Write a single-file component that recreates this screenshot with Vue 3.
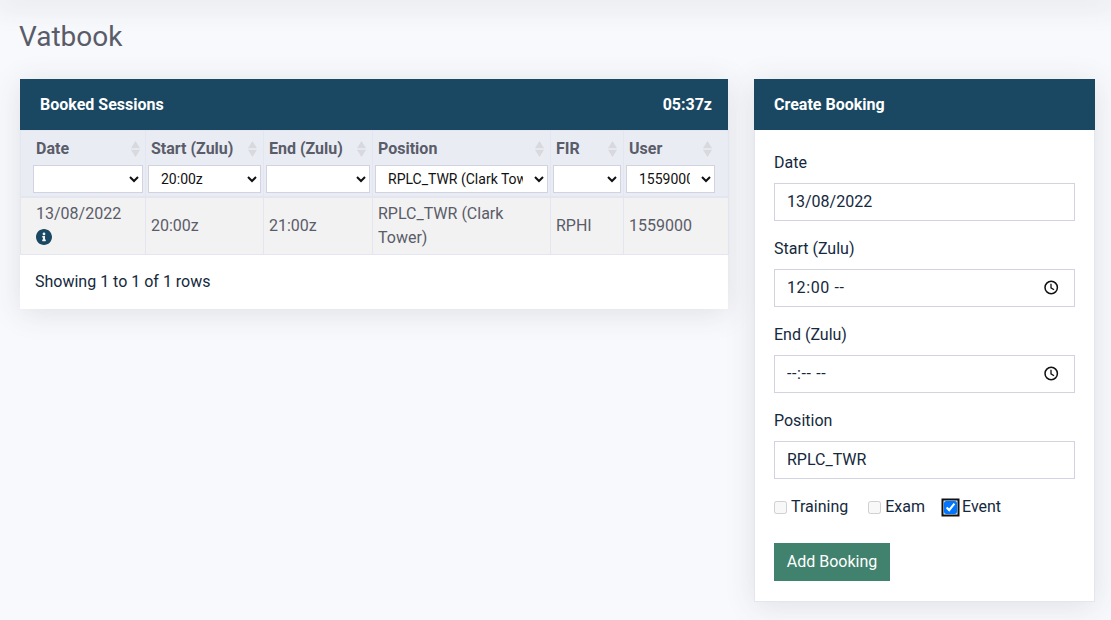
<script setup>
const columns = [
  { key: 'date', label: 'Date', selected: '', options: ['', '13/08/2022'] },
  { key: 'start', label: 'Start (Zulu)', selected: '20:00z', options: ['', '20:00z'] },
  { key: 'end', label: 'End (Zulu)', selected: '', options: ['', '21:00z'] },
  { key: 'position', label: 'Position', selected: 'RPLC_TWR (Clark Tower)', options: ['', 'RPLC_TWR (Clark Tower)'] },
  { key: 'fir', label: 'FIR', selected: '', options: ['', 'RPHI'] },
  { key: 'user', label: 'User', selected: '1559000', options: ['', '1559000'] }
]
const timeFields = [
  { label: 'Start (Zulu)', value: '12:00 --' },
  { label: 'End (Zulu)', value: '--:-- --' }
]
</script>

<template>
  <div class="page">
    <div class="topbar"></div>
    <h1 class="title">Vatbook</h1>
    <div class="layout">
      <section class="card sessions">
        <header class="card-head">
          <span>Booked Sessions</span>
          <span>05:37z</span>
        </header>
        <table class="table">
          <colgroup>
            <col v-for="c in columns" :key="c.key" :class="'w-' + c.key" />
          </colgroup>
          <thead>
            <tr>
              <th v-for="c in columns" :key="c.key" :class="'th-' + c.key">
                <div class="th-line">
                  <span>{{ c.label }}</span>
                  <svg class="sort" width="9" height="16" viewBox="0 0 9 16" aria-hidden="true">
                    <path d="M4.5 0 9 7.3H0z" fill="#d8d9de" />
                    <path d="M4.5 16 9 8.7H0z" fill="#d8d9de" />
                  </svg>
                </div>
                <select class="filter" :class="'sel-' + c.key">
                  <option v-for="o in c.options" :key="o" :selected="o === c.selected">{{ o }}</option>
                </select>
              </th>
            </tr>
          </thead>
          <tbody>
            <tr>
              <td class="td-date">
                13/08/2022
                <svg class="info" width="16" height="16" viewBox="8 8 496 496" aria-hidden="true">
                  <path fill="#1a4862" d="M256 8C119.043 8 8 119.083 8 256c0 136.997 111.043 248 248 248s248-111.003 248-248C504 119.083 392.957 8 256 8zm0 110c23.196 0 42 18.804 42 42s-18.804 42-42 42-42-18.804-42-42 18.804-42 42-42zm56 254c0 6.627-5.373 12-12 12h-88c-6.627 0-12-5.373-12-12v-24c0-6.627 5.373-12 12-12h12v-64h-12c-6.627 0-12-5.373-12-12v-24c0-6.627 5.373-12 12-12h64c6.627 0 12 5.373 12 12v100h12c6.627 0 12 5.373 12 12v24z" />
                </svg>
              </td>
              <td>20:00z</td>
              <td>21:00z</td>
              <td>RPLC_TWR (Clark Tower)</td>
              <td>RPHI</td>
              <td>1559000</td>
            </tr>
          </tbody>
        </table>
        <div class="pagination">Showing 1 to 1 of 1 rows</div>
      </section>

      <section class="card booking">
        <header class="card-head">
          <span>Create Booking</span>
        </header>
        <form class="form" @submit.prevent>
          <div class="group">
            <label>Date</label>
            <input class="control" type="text" value="13/08/2022" />
          </div>
          <div v-for="f in timeFields" :key="f.label" class="group">
            <label>{{ f.label }}</label>
            <div class="time-wrap">
              <input class="control time" type="text" :value="f.value" />
              <svg class="clock" width="15" height="15" viewBox="0 0 15 15" aria-hidden="true">
                <circle cx="7.2" cy="7.5" r="6.2" fill="none" stroke="#111" stroke-width="1.5" />
                <path d="M7 3.8v4l3 1.9" fill="none" stroke="#111" stroke-width="1.3" />
              </svg>
            </div>
          </div>
          <div class="group">
            <label>Position</label>
            <input class="control" type="text" value="RPLC_TWR" />
          </div>
          <div class="checks">
            <label class="check training"><input type="checkbox" disabled />Training</label>
            <label class="check exam"><input type="checkbox" disabled />Exam</label>
            <label class="check event"><input type="checkbox" checked />Event</label>
          </div>
          <button class="submit" type="submit">Add Booking</button>
        </form>
      </section>
    </div>
  </div>
</template>

<style scoped>
.page {
  min-height: 620px;
  box-sizing: border-box;
  padding: 0 16px 0 20px;
  background: #f8f9fc;
  font-family: Roboto, "Liberation Sans", sans-serif;
  font-size: 16px;
  line-height: 24px;
  color: #14293d;
  overflow: hidden;
}
.topbar {
  height: 0;
  margin: 0 -16px 0 -20px;
  box-shadow: 0 0 28px 6px rgba(58, 59, 69, 0.14);
}
.title {
  margin: 0 0 25px -1px;
  padding-top: 19px;
  font-size: 28px;
  line-height: 35px;
  font-weight: 400;
  color: #5a5c69;
}
.layout {
  display: flex;
  align-items: flex-start;
  gap: 26px;
}
.card {
  background: #fff;
  box-shadow: 0 4px 28px 0 rgba(58, 59, 69, 0.13);
  border: 0;
}
.sessions { width: 708px; flex: none; }
.booking { width: 341px; flex: none; }
.card-head {
  display: flex;
  justify-content: space-between;
  align-items: center;
  height: 51px;
  padding: 0 16px 0 20px;
  background: #1a4862;
  color: #fff;
  font-weight: 700;
}
.table {
  width: 708px;
  table-layout: fixed;
  border-collapse: collapse;
  color: #5a5c69;
}
.w-date { width: 125px; }
.w-start { width: 118px; }
.w-end { width: 109px; }
.w-position { width: 178px; }
.w-fir { width: 73px; }
.w-user { width: 105px; }
th, td {
  border: 1px solid #e3e6f0;
  text-align: left;
  box-sizing: border-box;
}
th {
  height: 66px;
  padding: 6px 0 2px 2px;
  background: #eaecf4;
  border-bottom-width: 2px;
  vertical-align: top;
  font-weight: 700;
}
td {
  height: 58px;
  padding: 4px 5px;
  background: #f2f2f2;
}
.td-date { padding-left: 15px; }
.info { display: block; margin: 3px 0 5px; }
.th-line {
  display: flex;
  justify-content: space-between;
  align-items: center;
  height: 24px;
  padding: 0 6px 0 3px;
  margin-bottom: 4px;
}
.th-date .th-line { padding-left: 13px; padding-right: 5px; }
.th-user .th-line { padding-right: 16px; }
.filter {
  display: block;
  box-sizing: border-box;
  height: 28px;
  padding: 0 8px;
  font-family: Roboto, "Liberation Sans", sans-serif;
  font-size: 14px;
  color: #111;
  background: #fff;
  border: 1px solid #d1d3e2;
  border-radius: 0;
}
.sel-date { width: 110px; margin-left: 10px; }
.sel-start { width: 113px; }
.sel-end { width: 104px; }
.sel-position { width: 173px; }
.sel-fir { width: 68px; }
.sel-user { width: 89px; }
.pagination {
  padding: 15px 15px 16px;
  height: 54px;
  box-sizing: border-box;
  color: #14293d;
}
.form {
  padding: 21px 19px 20px;
  border: 1px solid #e3e6f0;
  border-top: 0;
}
.group { margin-bottom: 16px; }
.group label {
  display: block;
  margin-bottom: 8px;
}
.control {
  display: block;
  box-sizing: border-box;
  width: 100%;
  height: 38px;
  padding: 5px 12px 7px;
  font-family: inherit;
  font-size: 16px;
  color: #14293d;
  background: #fff;
  border: 1px solid #d1d3e2;
  border-radius: 0;
  outline: none;
}
.time { letter-spacing: 0.6px; }
.time-wrap { position: relative; }
.clock {
  position: absolute;
  top: 11px;
  right: 16px;
}
.checks {
  display: flex;
  height: 24px;
  margin-bottom: 24px;
}
.check {
  display: flex;
  align-items: center;
}
.training { margin-right: 20px; }
.exam { margin-right: 19px; }
.check input {
  width: 13px;
  height: 13px;
  margin: 0 4px 0 0;
}
.event input {
  margin-right: 5px;
  border-radius: 3px;
  box-shadow: 0 0 0 0.5px #fff, 0 0 0 2.5px #101010;
}
.submit {
  display: block;
  box-sizing: border-box;
  width: 116px;
  height: 38px;
  padding: 0 0 2px;
  font-family: inherit;
  font-size: 16px;
  color: #fff;
  background: #41826e;
  border: 1px solid #41826e;
  border-radius: 0;
}
</style>

<style>
html, body { background: #f8f9fc; }
</style>
